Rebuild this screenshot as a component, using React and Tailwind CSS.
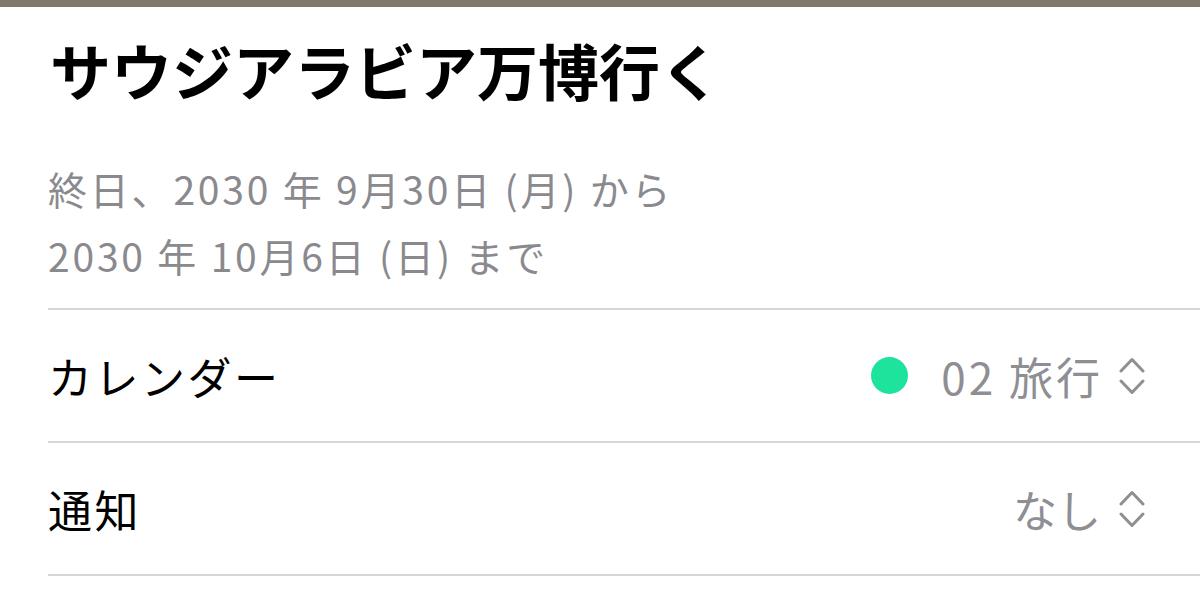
const UpDown = () => (
  <svg width="26" height="38" viewBox="0 0 26 38" fill="none" className="shrink-0">
    <path d="M2 14 L13 2.5 L24 14" stroke="#8e8e93" strokeWidth="3" strokeLinecap="round" strokeLinejoin="round" />
    <path d="M2 24 L13 35.5 L24 24" stroke="#8e8e93" strokeWidth="3" strokeLinecap="round" strokeLinejoin="round" />
  </svg>
);

const Row = ({ label, children }) => (
  <div className="h-[133px] flex items-center justify-between pr-[55px] border-b-2 border-[#d6d6d8]">
    <span className="text-[44px] leading-none tracking-[2.5px] text-black">{label}</span>
    <div className="flex items-center">{children}</div>
  </div>
);

const App = () => {
  return (
    <div
      className="w-[1200px] h-[594px] bg-white overflow-hidden"
      style={{ fontFamily: '"Noto Sans CJK JP", "Noto Sans", sans-serif' }}
    >
      <div className="h-[7px] bg-[#7f796b]" />

      <div className="pl-[48px]">
        <h1 className="mt-[28px] text-[61px] leading-[70px] font-bold text-black pl-[2px]">
          サウジアラビア万博行く
        </h1>

        <div className="mt-[50px] pb-[19px] text-[39px] leading-[67px] tracking-[2.8px] text-[#8a8a8e] border-b-2 border-[#d6d6d8]">
          <p>終日、2030 年 9月30日 (月) から</p>
          <p>2030 年 10月6日 (日) まで</p>
        </div>

        <Row label="カレンダー">
          <span className="w-[37px] h-[37px] rounded-full bg-[#1ee39c] mr-[33px]" />
          <span className="text-[44px] leading-none tracking-[3px] text-[#8e8e93]">02 旅行</span>
          <span className="ml-[16px]">
            <UpDown />
          </span>
        </Row>

        <Row label="通知">
          <span className="text-[44px] leading-none text-[#8e8e93]">なし</span>
          <span className="ml-[18px]">
            <UpDown />
          </span>
        </Row>
      </div>
    </div>
  );
};

export default App;
